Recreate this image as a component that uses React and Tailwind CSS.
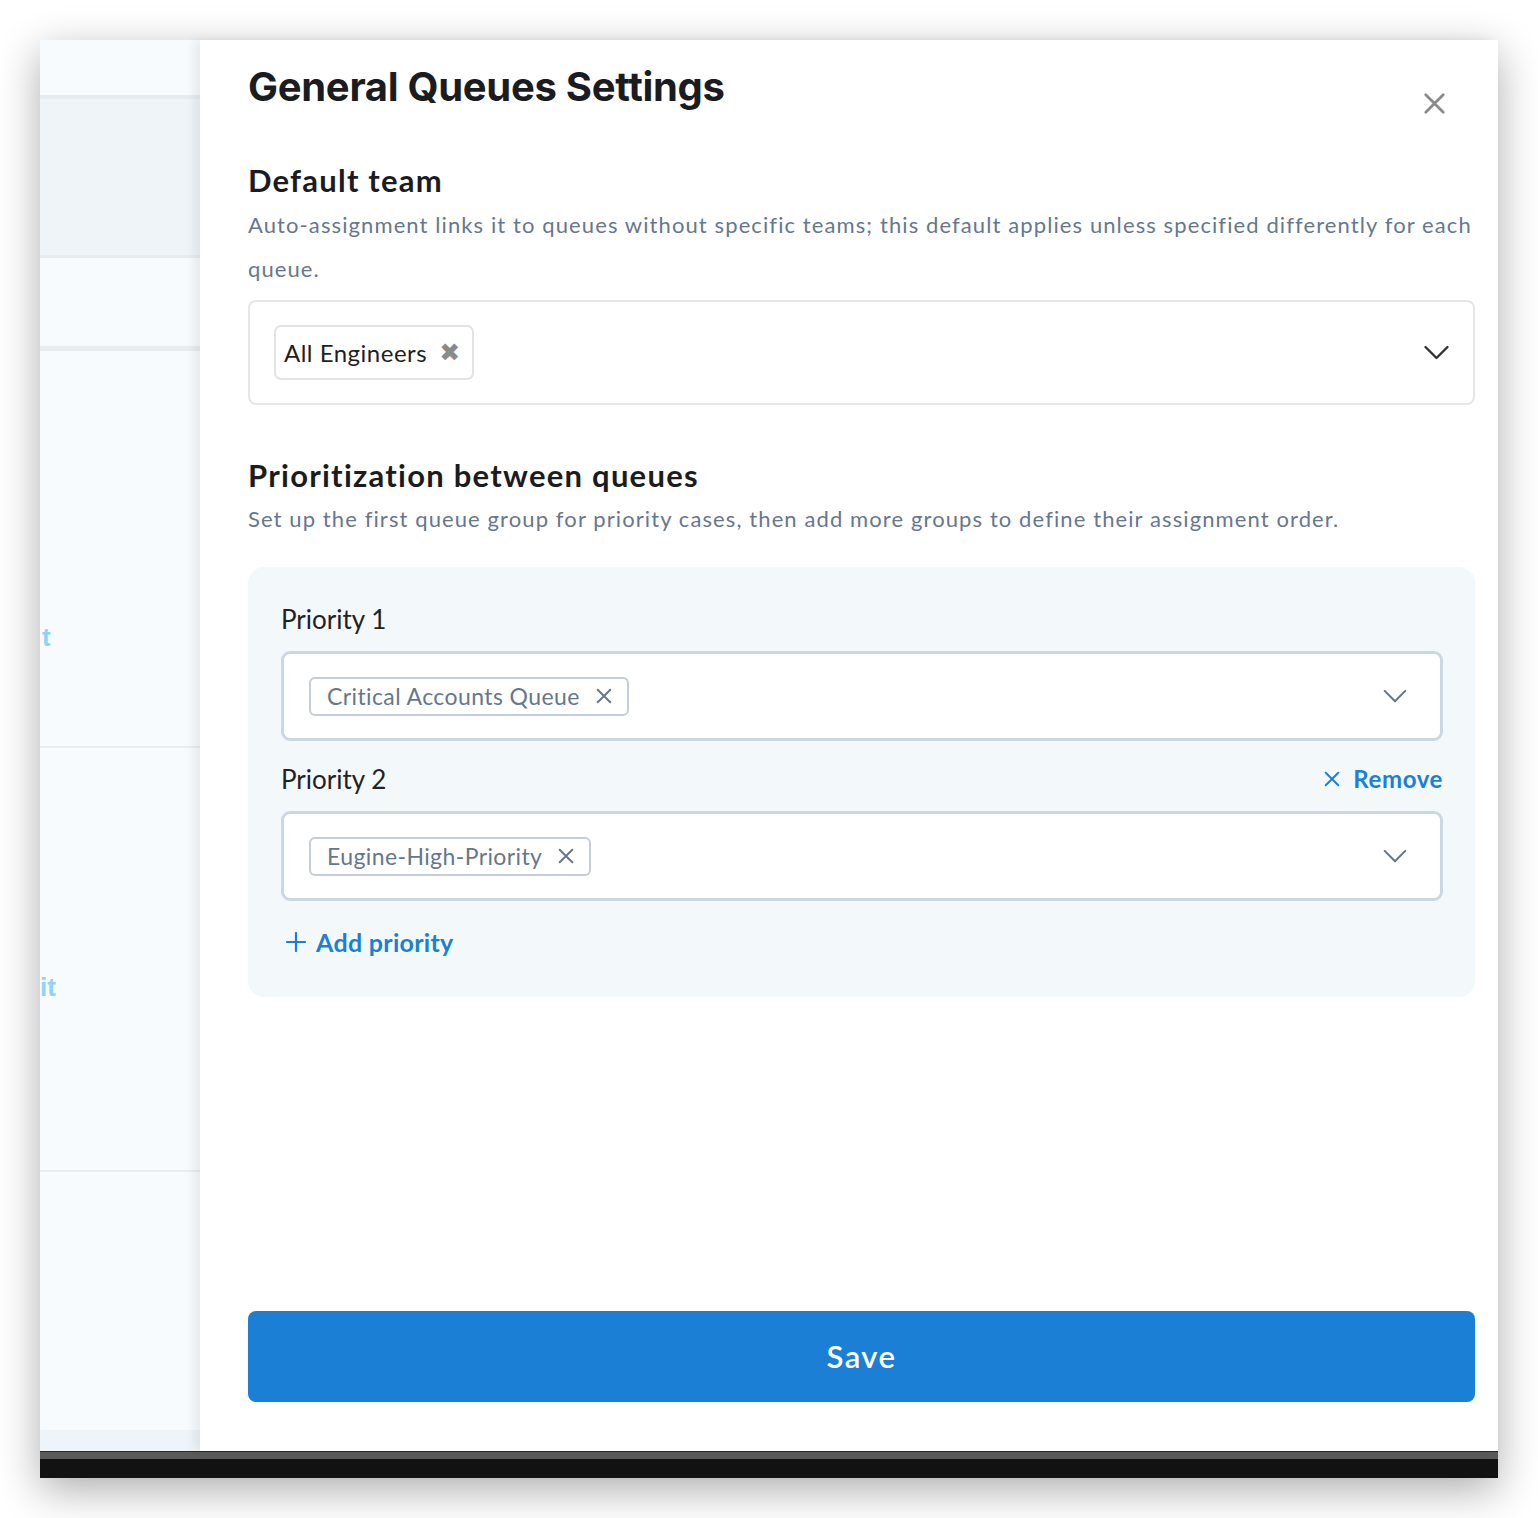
import React from "react";

const XThin = ({ className }) => (
  <svg viewBox="0 0 20 20" className={className} fill="none" stroke="currentColor" strokeWidth="2.2" strokeLinecap="round">
    <path d="M3 3 L17 17 M17 3 L3 17" />
  </svg>
);

const Chevron = ({ className, sw = 2.4 }) => (
  <svg viewBox="0 0 26 16" className={className} fill="none" stroke="currentColor" strokeWidth={sw} strokeLinecap="round" strokeLinejoin="round">
    <path d="M2 2 L13 13 L24 2" />
  </svg>
);

const PrioritySelect = ({ label }) => (
  <div className="flex h-[90px] items-center justify-between rounded-[9px] border-[3px] border-[#cad8e4] bg-white pl-[25px] pr-[32px]">
    <div className="flex h-[39px] items-center rounded-[6px] border-2 border-[#c6cdd7] pl-[16px] pr-[14px]">
      <span className="text-[23px] leading-none tracking-[0.4px] text-[#66778c]">{label}</span>
      <XThin className="ml-[15px] h-[18px] w-[18px] text-[#66778c]" />
    </div>
    <Chevron className="h-[15px] w-[26px] text-[#66778c]" sw={2.2} />
  </div>
);

export default function App() {
  return (
    <div className="h-[1518px] w-[1538px] bg-white p-[40px]" style={{ fontFamily: "Lato, 'Noto Sans', sans-serif" }}>
      <div className="flex h-[1438px] w-[1458px] flex-col shadow-[0_12px_40px_rgba(0,0,0,0.32)]">
        <div className="flex h-[1411px]">
          {/* left strip */}
          <div className="flex w-[160px] flex-col bg-[#f7fbfd]">
            <div className="h-[55px] shrink-0" />
            <div className="h-[4px] shrink-0 bg-[#e8ecef]" />
            <div className="h-[156px] shrink-0 bg-[#eff4f8]" />
            <div className="h-[3px] shrink-0 bg-[#e8ecef]" />
            <div className="h-[88px] shrink-0" />
            <div className="h-[5px] shrink-0 bg-[#e8ecef]" />
            <div className="flex h-[395px] shrink-0 flex-col pt-[270px]">
              <div className="pl-[2px] text-[26px] font-bold leading-[32px] text-[#8fd4f8]" style={{ fontFamily: "'Liberation Sans', Arial, sans-serif" }}>t</div>
            </div>
            <div className="h-[2px] shrink-0 bg-[#eaedf0]" />
            <div className="flex h-[422px] shrink-0 flex-col pt-[223px]">
              <div className="text-[26px] font-bold leading-[32px] text-[#8fd4f8]" style={{ fontFamily: "'Liberation Sans', Arial, sans-serif" }}>it</div>
            </div>
            <div className="h-[2px] shrink-0 bg-[#eaedf0]" />
            <div className="h-[258px] shrink-0" />
            <div className="flex-1 bg-[#eff4f8]" />
          </div>

          {/* main panel */}
          <div className="relative flex flex-1 flex-col bg-white pb-[49px] pl-[48px] pr-[23px] pt-[23px] shadow-[-6px_0_10px_rgba(0,0,0,0.07)]">
            <div className="flex items-start justify-between">
              <h1 className="text-[40px] font-bold leading-[48px] tracking-[-0.3px] text-[#1b1c1f]" style={{ fontFamily: "Inter, sans-serif" }}>
                General Queues Settings
              </h1>
              <XThin className="mr-[28px] mt-[28px] h-[25px] w-[25px] text-[#8a8a8a]" />
            </div>

            <h2 className="mt-[44px] text-[31px] font-bold leading-[40px] tracking-[1.2px] text-[#1b1c1f]">Default team</h2>
            <p className="mt-[3px] text-[22px] leading-[44px] tracking-[1.1px] text-[#66778f]">
              Auto-assignment links it to queues without specific teams; this default applies unless specified differently for each queue.
            </p>

            <div className="mt-[9px] flex h-[105px] items-center justify-between rounded-[8px] border-2 border-[#e6e6e6] pl-[24px] pr-[23px]">
              <div className="flex h-[55px] items-center rounded-[7px] border-2 border-[#e3e3e3] pl-[8px] pr-[12px]">
                <span className="text-[24px] leading-none tracking-[0.5px] text-[#1f1f1f]">All Engineers</span>
                <span className="ml-[12px] text-[25px] leading-none text-[#8a8a8a]" style={{ fontFamily: "'DejaVu Sans', sans-serif" }}>✖</span>
              </div>
              <Chevron className="h-[16px] w-[27px] text-[#333]" sw={2.4} />
            </div>

            <h2 className="mt-[50px] text-[31px] font-bold leading-[40px] tracking-[1.25px] text-[#1b1c1f]">Prioritization between queues</h2>
            <p className="text-[22px] leading-[48px] tracking-[1.1px] text-[#66778f]">
              Set up the first queue group for priority cases, then add more groups to define their assignment order.
            </p>

            <div className="mt-[24px] rounded-[16px] bg-[#f3f8fb] pb-[39px] pl-[33px] pr-[32px] pt-[36px]">
              <div className="text-[26px] leading-[32px] text-[#222]">Priority 1</div>
              <div className="mt-[16px]">
                <PrioritySelect label="Critical Accounts Queue" />
              </div>
              <div className="mt-[22px] flex items-center justify-between">
                <div className="text-[26px] leading-[32px] text-[#222]">Priority 2</div>
                <div className="flex items-center text-[#1a7fd5]">
                  <XThin className="h-[18px] w-[18px]" />
                  <span className="ml-[12px] text-[24px] font-bold leading-[32px] tracking-[0.6px]">Remove</span>
                </div>
              </div>
              <div className="mt-[16px]">
                <PrioritySelect label="Eugine-High-Priority" />
              </div>
              <div className="mt-[25px] flex items-center pl-[5px] text-[#1a7fd5]">
                <svg viewBox="0 0 20 20" className="h-[20px] w-[20px]" fill="none" stroke="currentColor" strokeWidth="2.2" strokeLinecap="round">
                  <path d="M10 1 V19 M1 10 H19" />
                </svg>
                <span className="ml-[10px] text-[25px] font-bold leading-[32px] tracking-[0.3px]">Add priority</span>
              </div>
            </div>

            <div className="flex-1" />

            <button className="flex h-[91px] w-full items-center justify-center rounded-[8px] bg-[#1a7fd5] text-[31px] font-semibold tracking-[1.5px] text-white">
              Save
            </button>
          </div>
        </div>

        {/* bottom dark bar */}
        <div className="flex h-[27px] flex-col">
          <div className="h-[1px] bg-[#2a2a2a]" />
          <div className="h-[7px] bg-[#5a5a5a]" />
          <div className="flex-1 bg-[#121212]" />
        </div>
      </div>
    </div>
  );
}
